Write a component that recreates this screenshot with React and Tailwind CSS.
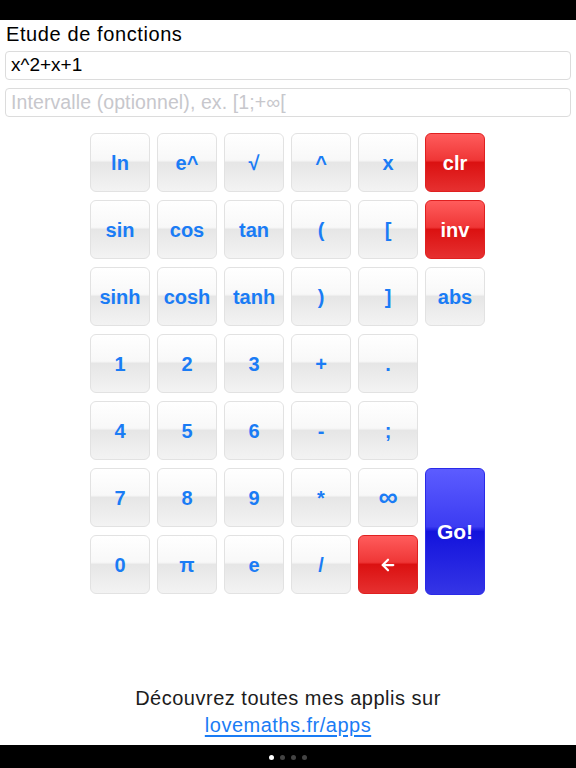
import React from 'react';
import { ArrowLeft } from 'lucide-react';

const keys = [
  ['ln', 'e^', '√', '^', 'x', 'clr'],
  ['sin', 'cos', 'tan', '(', '[', 'inv'],
  ['sinh', 'cosh', 'tanh', ')', ']', 'abs'],
  ['1', '2', '3', '+', '.', null],
  ['4', '5', '6', '-', ';', null],
  ['7', '8', '9', '*', '∞', 'go'],
  ['0', 'π', 'e', '/', 'back', 'skip'],
];

const base = 'flex items-center justify-center rounded-[6px] border font-bold h-[59px]';
const grey =
  'border-[#e2e2e2] text-[#1a7cf5] bg-[linear-gradient(to_bottom,#ffffff_0%,#f8f8f8_46%,#e6e6e6_50%,#f3f3f3_100%)]';
const red =
  'border-[#e02020] text-white bg-[linear-gradient(to_bottom,#ff5c5c_0%,#ef3636_46%,#db1111_50%,#e63030_100%)]';
const blue =
  'border-[#2a2ae8] text-white bg-[linear-gradient(to_bottom,#5c5cff_0%,#3c3cf2_46%,#1313dc_50%,#3535e6_100%)]';

const Key = ({ k }) => {
  if (k === null) return <div />;
  if (k === 'skip') return null;
  if (k === 'go')
    return (
      <div className={`${base} ${blue} row-span-2 h-auto text-[21px]`}>Go!</div>
    );
  if (k === 'back')
    return (
      <div className={`${base} ${red}`}>
        <ArrowLeft size={18} strokeWidth={3} />
      </div>
    );
  const isRed = k === 'clr' || k === 'inv';
  const size = k === '∞' ? 'text-[27px]' : 'text-[20px]';
  return (
    <div className={`${base} ${isRed ? red : grey} ${size}`}>{k}</div>
  );
};

export default function App() {
  return (
    <div className="w-[576px] h-[768px] flex flex-col bg-white font-['Liberation_Sans',Arial,sans-serif]">
      <div className="h-[20px] bg-black" />
      <div className="flex-1 flex flex-col">
        <div className="px-[6px] pt-[1px] h-[31px] text-[20px] tracking-[0.6px] leading-[26px] text-black">
          Etude de fonctions
        </div>
        <div className="mx-[5px] h-[29px] border border-[#dcdcdc] rounded-[4px] px-[5px] flex items-center text-[19px] text-black">
          x^2+x+1
        </div>
        <div className="mx-[5px] mt-[8px] h-[29px] border border-[#dcdcdc] rounded-[4px] px-[5px] flex items-center text-[19.5px] tracking-[0.1px] text-[#c7c7cc]">
          Intervalle (optionnel), ex. [1;+∞[
        </div>
        <div className="mt-[16px] ml-[90px] w-[395px] grid grid-cols-6 gap-[7px] auto-rows-[60px]">
          {keys.flat().map((k, i) => (
            <Key key={i} k={k} />
          ))}
        </div>
        <div className="flex-1" />
        <div className="pb-[6px] text-center text-[20px] tracking-[0.5px] leading-[27px]">
          <div className="text-[#1c1c1c]">Découvrez toutes mes applis sur</div>
          <div className="text-[#1a7cf5] underline underline-offset-[3px]">lovemaths.fr/apps</div>
        </div>
      </div>
      <div className="h-[23px] bg-black flex items-center justify-center gap-[6px] pt-[1px]">
        <span className="w-[5px] h-[5px] rounded-full bg-white" />
        <span className="w-[5px] h-[5px] rounded-full bg-[#444]" />
        <span className="w-[5px] h-[5px] rounded-full bg-[#444]" />
        <span className="w-[5px] h-[5px] rounded-full bg-[#444]" />
      </div>
    </div>
  );
}
